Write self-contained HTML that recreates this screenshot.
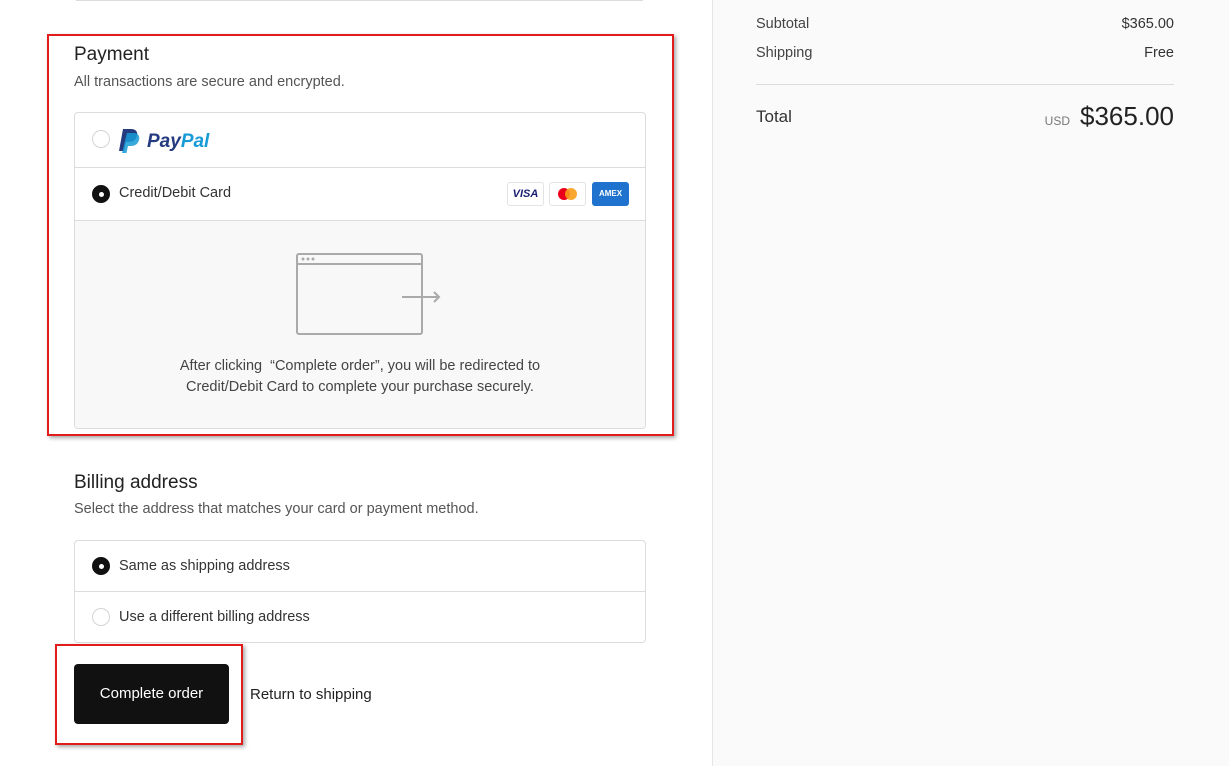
<!DOCTYPE html>
<html><head><meta charset="utf-8"><style>
*{margin:0;padding:0;box-sizing:border-box}
body{width:1229px;height:766px;overflow:hidden;background:#fff;font-family:"Liberation Sans",sans-serif;color:#333;position:relative}
.a{position:absolute}
.right{left:712px;top:0;width:517px;height:766px;background:#fafafa;border-left:1px solid #e6e6e6}
.t14{font-size:14.5px}
.box{border:1px solid #dcdcdc;border-radius:4px;background:#fff}
.radio{width:18px;height:18px;border-radius:50%;border:1px solid #d4d4d4;background:#fff}
.radio.on{background:#111;border-color:#111}
.radio.on::after{content:"";position:absolute;left:6px;top:6px;width:5px;height:5px;border-radius:50%;background:#fff}
.red{border:2px solid #e21b1b;box-shadow:2px 2px 4px rgba(0,0,0,.35)}
</style></head><body>
<div class="a" style="left:76px;top:0;width:567px;border-top:1px solid #dcdcdc"></div>

<div class="a" style="left:74px;top:44px;font-size:19px;color:#222">Payment</div>
<div class="a t14" style="left:74px;top:74px;color:#555">All transactions are secure and encrypted.</div>

<div class="a box" style="left:74px;top:112px;width:572px;height:317px;overflow:hidden">
  <div class="a radio" style="left:17px;top:17px"></div>
  <svg class="a" style="left:44px;top:15px" width="98" height="25" viewBox="0 0 98 25">
    <path d="M4 1h8c5 0 7 3 6 7-1 4-4 6-8 6H7l-2 9H0z" fill="#253b80"/>
    <path d="M8 5h7c4 0 6 3 5 7-1 4-4 6-8 6h-3l-1.5 7H3z" fill="#179bd7" opacity=".85"/>
    <text x="28" y="19" font-family="Liberation Sans" font-weight="bold" font-style="italic" font-size="19" fill="#253b80">Pay<tspan fill="#179bd7">Pal</tspan></text>
  </svg>
  <div class="a" style="left:0;top:54px;width:100%;border-top:1px solid #dcdcdc"></div>
  <div class="a radio on" style="left:17px;top:72px"></div>
  <div class="a t14" style="left:44px;top:72px;color:#333">Credit/Debit Card</div>
  <div class="a" style="left:432px;top:69px;width:37px;height:24px;border:1px solid #e3e3e3;border-radius:3px;font:italic bold 11px 'Liberation Sans';color:#1a1f71;text-align:center;line-height:22px">VISA</div>
  <div class="a" style="left:474px;top:69px;width:37px;height:24px;border:1px solid #e3e3e3;border-radius:3px">
    <div class="a" style="left:8px;top:5px;width:12px;height:12px;border-radius:50%;background:#eb001b"></div>
    <div class="a" style="left:15px;top:5px;width:12px;height:12px;border-radius:50%;background:#f79e1b;opacity:.9"></div>
  </div>
  <div class="a" style="left:517px;top:69px;width:37px;height:24px;border-radius:3px;background:#1f72cd;color:#fff;font:bold 8px 'Liberation Sans';text-align:center;line-height:24px">AMEX</div>
  <div class="a" style="left:0;top:107px;width:100%;height:210px;background:#f8f8f8;border-top:1px solid #dcdcdc"></div>
  <svg class="a" style="left:221px;top:140px" width="150" height="84">
    <rect x="1" y="1" width="125" height="80" rx="2" fill="none" stroke="#aaa" stroke-width="2"/>
    <line x1="1" y1="11" x2="126" y2="11" stroke="#aaa" stroke-width="2"/>
    <circle cx="7" cy="6" r="1.5" fill="#aaa"/><circle cx="12" cy="6" r="1.5" fill="#aaa"/><circle cx="17" cy="6" r="1.5" fill="#aaa"/>
    <line x1="106" y1="44" x2="143" y2="44" stroke="#aaa" stroke-width="2"/>
    <path d="M138 39l5 5-5 5" fill="none" stroke="#aaa" stroke-width="2"/>
  </svg>
  <div class="a t14" style="left:0;top:243px;width:100%;text-align:center;line-height:21px;color:#444">After clicking &nbsp;“Complete order”, you will be redirected to<br>Credit/Debit Card to complete your purchase securely.</div>
</div>
<div class="a red" style="left:47px;top:34px;width:627px;height:402px"></div>

<div class="a" style="left:74px;top:472px;font-size:19px;color:#222">Billing address</div>
<div class="a t14" style="left:74px;top:501px;color:#555">Select the address that matches your card or payment method.</div>
<div class="a box" style="left:74px;top:540px;width:572px;height:103px">
  <div class="a radio on" style="left:17px;top:16px"></div>
  <div class="a t14" style="left:44px;top:17px">Same as shipping address</div>
  <div class="a" style="left:0;top:50px;width:100%;border-top:1px solid #dcdcdc"></div>
  <div class="a radio" style="left:17px;top:67px"></div>
  <div class="a t14" style="left:44px;top:68px">Use a different billing address</div>
</div>

<div class="a" style="left:74px;top:664px;width:155px;height:60px;background:#111;border-radius:4px;color:#fff;font-size:15px;text-align:center;line-height:60px">Complete order</div>
<div class="a" style="left:250px;top:686px;font-size:15px;color:#222">Return to shipping</div>
<div class="a red" style="left:55px;top:644px;width:188px;height:101px"></div>

<div class="a right">
  <div class="a t14" style="left:43px;top:16px;color:#444">Subtotal</div>
  <div class="a t14" style="right:55px;top:16px;color:#333">$365.00</div>
  <div class="a t14" style="left:43px;top:45px;color:#444">Shipping</div>
  <div class="a t14" style="right:55px;top:45px;color:#333">Free</div>
  <div class="a" style="left:43px;top:84px;width:418px;border-top:1px solid #dcdcdc"></div>
  <div class="a" style="left:43px;top:107px;font-size:17px;color:#333">Total</div>
  <div class="a" style="right:55px;top:101px;display:flex;align-items:baseline;gap:10px">
    <span style="font-size:12px;color:#777">USD</span>
    <span style="font-size:26px;color:#222">$365.00</span>
  </div>
</div>
</body></html>
